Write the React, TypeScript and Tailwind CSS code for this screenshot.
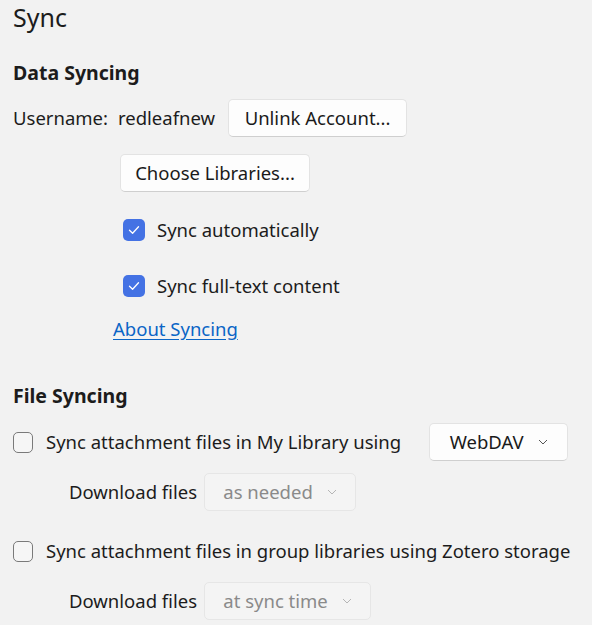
const font = { fontFamily: '"Noto Sans", "Open Sans", sans-serif' };

function Check({ checked }: { checked: boolean }) {
  if (checked) {
    return (
      <span className="flex h-[22px] w-[22px] shrink-0 items-center justify-center rounded-[5px] bg-[#4472e4]">
        <svg width="12" height="10" viewBox="0 0 12 10" fill="none">
          <path d="M1.5 5.2 L4.6 8.2 L10.5 1.8" stroke="white" strokeWidth="1.3" strokeLinecap="round" strokeLinejoin="round" />
        </svg>
      </span>
    );
  }
  return <span className="h-[21px] w-[20px] shrink-0 rounded-[5px] border border-[#7a7a7a] bg-[#f6f6f6]" />;
}

function Chevron({ color }: { color: string }) {
  return (
    <svg width="10" height="6" viewBox="0 0 10 6" fill="none">
      <path d="M1 1 L5 5 L9 1" stroke={color} strokeWidth="1" />
    </svg>
  );
}

function Button({ children, className }: { children: React.ReactNode; className?: string }) {
  return (
    <div
      className={
        'flex h-[38px] shrink-0 items-center justify-center rounded-[5px] border border-[#e3e3e3] border-b-[#cfcfcf] bg-[#fdfdfd] text-[18.5px] text-[#1a1a1a] ' +
        (className ?? '')
      }
    >
      {children}
    </div>
  );
}

export default function App() {
  return (
    <div className="min-h-[625px] w-[592px] overflow-hidden bg-[#f2f2f2] text-[18.5px] text-[#1c1c1c]" style={font}>
      <div className="pl-[13px]">
        <h1 className="text-[25px] leading-[34px] text-[#1c1c1c]">Sync</h1>

        <h2 className="mt-[24px] text-[19.5px] font-bold leading-[30px]">Data Syncing</h2>

        <div className="mt-[11px] flex items-center">
          <span>Username:</span>
          <span className="ml-[10px]">redleafnew</span>
          <Button className="ml-[13px] w-[179px]">Unlink Account...</Button>
        </div>

        <div className="pl-[107px]">
          <Button className="mt-[17px] w-[190px]">Choose Libraries...</Button>
          <div className="mt-[27px] flex h-[22px] items-center gap-[12px] pl-[3px]">
            <Check checked />
            <span>Sync automatically</span>
          </div>
          <div className="mt-[34px] flex h-[22px] items-center gap-[12px] pl-[3px]">
            <Check checked />
            <span>Sync full-text content</span>
          </div>
        </div>
        <a className="ml-[100px] mt-[18px] inline-block leading-[28px] text-[#0a65c6] underline underline-offset-[3px]">
          About Syncing
        </a>

        <h2 className="mt-[38px] text-[19.5px] font-bold leading-[30px]">File Syncing</h2>

        <div className="mt-[12px] flex items-center">
          <Check checked={false} />
          <span className="ml-[13px] whitespace-nowrap">Sync attachment files in My Library using</span>
          <Button className="ml-[28px] w-[139px] gap-[14px]">
            <span>WebDAV</span>
            <Chevron color="#555" />
          </Button>
        </div>

        <div className="mt-[12px] flex items-center pl-[56px]">
          <span>Download files</span>
          <div className="ml-[7px] flex h-[38px] w-[152px] items-center justify-center gap-[14px] rounded-[5px] border border-[#e6e6e6] bg-[#f4f4f4] text-[#8a8a8a]">
            <span>as needed</span>
            <Chevron color="#b5b5b5" />
          </div>
        </div>

        <div className="mt-[29px] flex h-[22px] items-center">
          <Check checked={false} />
          <span className="ml-[13px] whitespace-nowrap">Sync attachment files in group libraries using Zotero storage</span>
        </div>

        <div className="mt-[20px] flex items-center pl-[56px]">
          <span>Download files</span>
          <div className="ml-[7px] flex h-[38px] w-[167px] items-center justify-center gap-[14px] rounded-[5px] border border-[#e6e6e6] bg-[#f4f4f4] text-[#8a8a8a]">
            <span>at sync time</span>
            <Chevron color="#b5b5b5" />
          </div>
        </div>
      </div>
    </div>
  );
}
